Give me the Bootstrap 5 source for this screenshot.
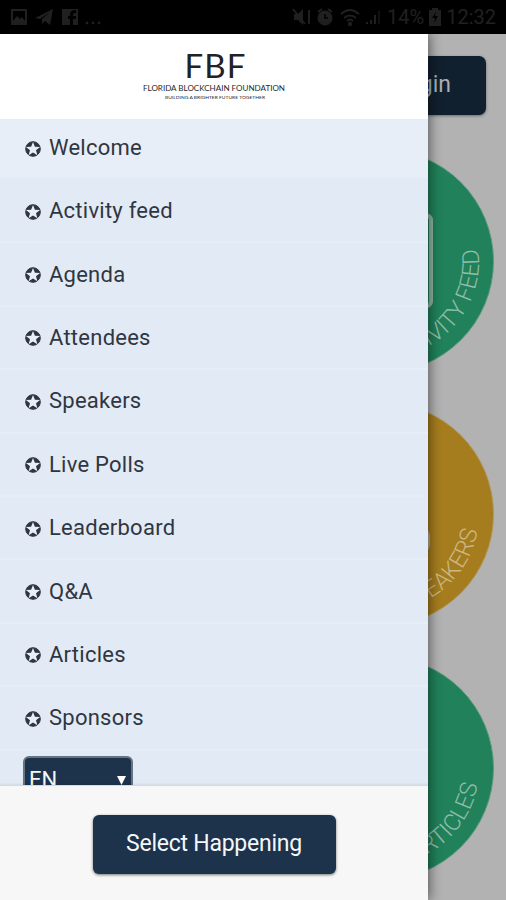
<!DOCTYPE html>
<html lang="en">
<head>
<meta charset="utf-8">
<meta name="viewport" content="width=device-width, initial-scale=1">
<title>Florida Blockchain Foundation</title>
<link href="https://cdn.jsdelivr.net/npm/bootstrap@5.3.0/dist/css/bootstrap.min.css" rel="stylesheet">
<style>
body{font-family:Roboto,"Liberation Sans",sans-serif;background:#b2b2b2;height:900px}
.status{height:34px;background:#000;color:#202020;font-size:20px;line-height:34px;padding:0 10px}
.stage{height:866px}
.backdrop-page{height:866px;padding:22px 20px 0 0}
.login{width:112px;height:59px;background:#11202f;color:#a9afb4;border-radius:7px;font-size:23px;padding:0 34px 0 0;box-shadow:0 1px 3px #0006}
.discs{width:224px;margin:10px -8px 0 0;gap:29px}
.disc{width:224px;height:224.4px;display:block}
.disc text{font-family:Roboto,"Liberation Sans",sans-serif;font-weight:300;font-size:23.5px}
.drawer{width:428px;height:866px;top:0;left:0;background:#e2eaf5;box-shadow:2px 0 11px #0007}
.brand{height:85px;background:#fff;flex:none}
.menu{height:666px;flex:none}
.menu-item{height:63.4px;padding:0 24px;border-bottom:2px solid #e7edf6;color:#303641;font-size:22px;letter-spacing:.25px;gap:7px}
.menu-item:first-child{height:61px;padding-bottom:2px;background:#e7eef8;border-color:#e2eaf5}
.menu-item svg{margin-top:2px}
.lang{width:110px;height:56px;margin:5px 0 0 23px;background:#1c334b;color:#f6f7f8;border:2px solid #667482;border-radius:6px;font-size:22px;padding:7px 5px 0 4px;line-height:30px}
.lang svg{margin-top:11px}
.foot{height:115px;background:#f7f7f7;border-top:1px solid #d5d9e1;box-shadow:0 -1px 2px #0001}
.happening{width:243px;height:59px;margin-top:2px;background:#1c334b;color:#f5f7f9;border-radius:6px;font-size:23px;letter-spacing:-.25px;box-shadow:0 1px 3px #0008;padding:0}
</style>
</head>
<body class="overflow-hidden">
<header class="status d-flex justify-content-between align-items-center">
  <div class="d-flex align-items-center">
    <svg width="95" height="24" viewBox="0 0 95 24" fill="#202020">
      <path fill-rule="evenodd" d="M1 4h16v16H1zM3 6v10l4-5 3 3 2-2 3 4V6z"/>
      <path d="M25 13 43 4l-3 16-5-4-3 3v-5l8-7-10 7z"/>
      <path fill-rule="evenodd" d="M52 4h16v16H52zM60 20v-6h-2v-3h2V9q0-4 6-4v3q-3 0-3 1v2h3v3h-3v6z"/>
      <circle cx="77" cy="18" r="1.4"/><circle cx="83" cy="18" r="1.4"/><circle cx="89" cy="18" r="1.4"/>
    </svg>
  </div>
  <div class="d-flex align-items-center">
    <svg width="94" height="24" viewBox="0 0 94 24" fill="none" stroke="#202020" stroke-width="2">
      <path d="M5 9h4l5-5v16l-5-5H5z" fill="#202020" stroke="none"/><path d="m4 4 12 15M20 5v14"/>
      <circle cx="36" cy="13" r="6.5" fill="#202020"/><path d="m29 7 4-3m6 0 4 3"/><path d="M36 9v4h3" stroke="#000" stroke-width="1.5"/>
      <path d="M52 9q9-8 18 0M55 13q6-5 12 0M58 16q3-3 6 0"/><circle cx="61" cy="19" r="1.2"/>
      <path d="M78 19v-2M82 19v-4M86 19V10"/><path d="M90 19V6" stroke-width="1"/>
    </svg>
    <span class="ms-1">14%</span>
    <svg class="mx-1" width="14" height="20" viewBox="0 0 14 20"><path d="M4 1h6v2h3v16H1V3h3z" fill="#202020"/><path d="m8 5-4 6h3l-1 5 4-7H7z" fill="#000"/></svg>
    <span>12:32</span>
  </div>
</header>
<main class="stage position-relative">
  <div class="backdrop-page d-flex flex-column align-items-end">
    <button class="btn login text-end">Login</button>
    <div class="discs d-flex flex-column">
      <svg class="disc mt-4" viewBox="0 0 224 224">
        <defs><path id="rim" d="M112 15A97 97 0 1 0 112 209A97 97 0 1 0 112 15"/></defs>
        <circle cx="112" cy="112" r="111.500" fill="#20815a" stroke="#5d9a7f"/>
        <rect x="60" y="66" width="101" height="91" rx="5" fill="none" stroke="#8fb5a2" stroke-width="4"/>
        <text fill="#91bda8" text-anchor="end"><textPath href="#rim" startOffset="469">ACTIVITY FEED</textPath></text>
      </svg>
      <svg class="disc" viewBox="0 0 224 224">
        <circle cx="112" cy="112" r="111.500" fill="#a57d1e" stroke="#b09658"/>
        <rect x="100" y="123" width="60" height="30" rx="12" fill="#b7ac91"/>
        <text fill="#cbb883" text-anchor="end"><textPath href="#rim" startOffset="440">SPEAKERS</textPath></text>
      </svg>
      <svg class="disc" viewBox="0 0 224 224">
        <circle cx="112" cy="112" r="111.500" fill="#20815a" stroke="#5d9a7f"/>
        <text fill="#91bda8" text-anchor="end"><textPath href="#rim" startOffset="440">ARTICLES</textPath></text>
      </svg>
    </div>
  </div>
  <aside class="drawer position-absolute d-flex flex-column">
    <div class="brand">
      <svg width="428" height="85" viewBox="0 0 428 85" fill="#292929" text-anchor="middle" font-family="Lato, sans-serif">
        <text x="215" y="44" font-size="33" font-weight="400" textLength="61" fill="#222">FBF</text>
        <text x="214" y="56.500" font-size="6.8" textLength="142" lengthAdjust="spacingAndGlyphs">FLORIDA BLOCKCHAIN FOUNDATION</text>
        <text x="215" y="64.500" font-size="3.8" textLength="100" lengthAdjust="spacingAndGlyphs">BUILDING A BRIGHTER FUTURE TOGETHER</text>
      </svg>
    </div>
    <nav class="menu overflow-hidden">
      <svg class="d-none"><symbol id="star" viewBox="0 0 18 18"><circle cx="9" cy="9" r="7.3" fill="#303641" stroke="#303641"/><path d="m9 1.900 1.900 4.800 5.100.3-4 3.200 1.400 5L9 12.400l-4.400 2.800 1.400-5L2 7l5.100-.3z" fill="#e9eff8"/></symbol></svg>
      <div class="menu-list">
        <div class="menu-item d-flex align-items-center"><svg width="18" height="18"><use href="#star"/></svg>Welcome</div>
        <div class="menu-item d-flex align-items-center"><svg width="18" height="18"><use href="#star"/></svg>Activity feed</div>
        <div class="menu-item d-flex align-items-center"><svg width="18" height="18"><use href="#star"/></svg>Agenda</div>
        <div class="menu-item d-flex align-items-center"><svg width="18" height="18"><use href="#star"/></svg>Attendees</div>
        <div class="menu-item d-flex align-items-center"><svg width="18" height="18"><use href="#star"/></svg>Speakers</div>
        <div class="menu-item d-flex align-items-center"><svg width="18" height="18"><use href="#star"/></svg>Live Polls</div>
        <div class="menu-item d-flex align-items-center"><svg width="18" height="18"><use href="#star"/></svg>Leaderboard</div>
        <div class="menu-item d-flex align-items-center"><svg width="18" height="18"><use href="#star"/></svg>Q&amp;A</div>
        <div class="menu-item d-flex align-items-center"><svg width="18" height="18"><use href="#star"/></svg>Articles</div>
        <div class="menu-item d-flex align-items-center"><svg width="18" height="18"><use href="#star"/></svg>Sponsors</div>
      </div>
      <div class="lang d-flex justify-content-between align-items-start"><span>EN</span><svg width="9" height="9"><path d="M0 0h9L4.500 9z" fill="#fff"/></svg></div>
    </nav>
    <footer class="foot d-flex justify-content-center align-items-center"><button class="btn happening">Select Happening</button></footer>
  </aside>
</main>
<script src="https://cdn.jsdelivr.net/npm/bootstrap@5.3.0/dist/js/bootstrap.bundle.min.js"></script>
</body>
</html>
